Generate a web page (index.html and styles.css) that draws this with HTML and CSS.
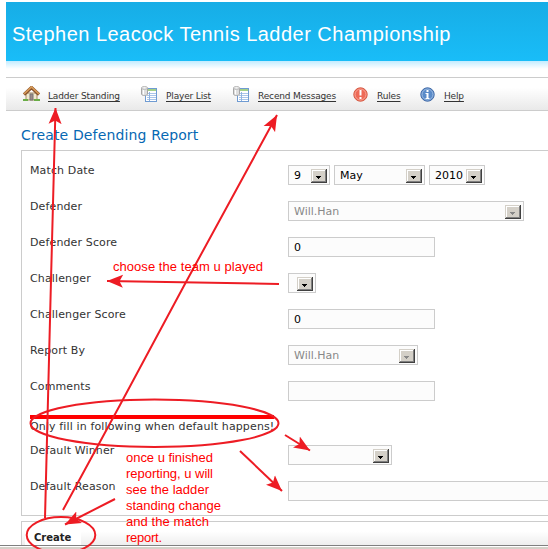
FILE: index.html
```
<!DOCTYPE html>
<html lang="en">
<head>
<meta charset="utf-8">
<title>Create Defending Report</title>
<link rel="stylesheet" href="styles.css">
</head>
<body>
<svg class="defs" width="0" height="0" aria-hidden="true">
  <symbol id="table" viewBox="0 0 17 17">
    <rect x="4.5" y="2.5" width="11" height="13" fill="#fff" stroke="#6f9bd2"/>
    <rect x="5" y="3" width="10" height="2" fill="#a3d088"/>
    <path d="M6 7.5h9M6 9.5h9M6 11.5h9M6 13.500h9" stroke="#a9c5ea"/>
    <path d="M8.500 6v9" stroke="#8fb3e0"/>
    <path d="M0.500 2v6c0 2 6 2 6 0v-6z" fill="#dedede" stroke="#a5a5a5"/>
    <ellipse cx="3.500" cy="1.900" rx="3" ry="1.400" fill="#f1f1f1" stroke="#b5b5b5"/>
    <path d="M2.500 4v4.500" stroke="#fff"/>
  </symbol>
  <symbol id="drop" viewBox="0 0 16 14">
    <path d="M0 0h16v14H0z" fill="#404040"/>
    <path d="M0 0h15v13H0z" fill="#d4d0c8"/>
    <path d="M1 1h14v12H1z" fill="#808080"/>
    <path d="M1 1h13v11H1z" fill="#fff"/>
    <path d="M2 2h12v10H2z" fill="#d4d0c8"/>
    <path d="M5 7h5v1H9v1H8v1H7V9H6V8H5z" fill="currentColor"/>
  </symbol>
</svg>
<div class="page">
  <header class="banner"><h1>Stephen Leacock Tennis Ladder Championship</h1></header>
  <div class="glow"></div>
  <nav class="menu">
    <a class="item home" href="#">
      <svg width="17" height="16" viewBox="0 0 17 16"><path d="M3 7h11v7H3z" fill="#f1e8cf" stroke="#a78b61"/><path d="M1 8.500 8.500 1.500 16 8.500" fill="none" stroke="#87512b" stroke-width="3.200"/><path d="M1 8 8.500 1 16 8" fill="none" stroke="#d79a57" stroke-width="1.700"/><path d="M7 8h3v6H7z" fill="#9c8a88" stroke="#777"/><path d="M0 13h5v2H0zM11 13h6v2h-6z" fill="#69ad47"/></svg>
      <span>Ladder Standing</span></a>
    <a class="item players" href="#"><svg width="17" height="17"><use href="#table"/></svg><span>Player List</span></a>
    <a class="item messages" href="#"><svg width="17" height="17"><use href="#table"/></svg><span>Recend Messages</span></a>
    <a class="item rules" href="#">
      <svg width="15" height="15" viewBox="0 0 15 15"><circle cx="7.500" cy="7.500" r="6.700" fill="#ee6a57" stroke="#d4563f"/><circle cx="7.500" cy="7.500" r="5.500" fill="none" stroke="#f8a597"/><path d="M6.500 3h2v5.500h-2zM6.500 10h2v2h-2z" fill="#fff"/></svg>
      <span>Rules</span></a>
    <a class="item help" href="#">
      <svg width="15" height="15" viewBox="0 0 15 15"><circle cx="7.500" cy="7.500" r="6.700" fill="#5a8bc9" stroke="#3d66a4"/><circle cx="7.500" cy="7.500" r="5.500" fill="none" stroke="#9dbce2"/><path d="M6.500 3h2v2h-2zM5.500 6h3v5h1v1h-4v-1h1V7h-1z" fill="#fff"/></svg>
      <span>Help</span></a>
  </nav>
  <h2>Create Defending Report</h2>
  <form class="panel">
    <div class="row"><label>Match Date</label>
      <div class="controls">
        <div class="field day">9<svg width="16" height="14"><use href="#drop"/></svg></div>
        <div class="field month">May<svg width="16" height="14"><use href="#drop"/></svg></div>
        <div class="field year">2010<svg width="16" height="14"><use href="#drop"/></svg></div>
      </div></div>
    <div class="row"><label>Defender</label><div class="field defender off">Will.Han<svg width="16" height="14"><use href="#drop"/></svg></div></div>
    <div class="row"><label>Defender Score</label><div class="field text">0</div></div>
    <div class="row"><label>Challenger</label><div class="field challenger"><svg width="16" height="14"><use href="#drop"/></svg></div></div>
    <div class="row"><label>Challenger Score</label><div class="field text">0</div></div>
    <div class="row"><label>Report By</label><div class="field reporter off">Will.Han<svg width="16" height="14"><use href="#drop"/></svg></div></div>
    <div class="row"><label>Comments</label><div class="field text"></div></div>
    <p class="note">Only fill in following when default happens!</p>
    <div class="row"><label>Default Winner</label><div class="field winner"><svg width="16" height="14"><use href="#drop"/></svg></div></div>
    <div class="row"><label>Default Reason</label><div class="field reason"></div></div>
  </form>
  <div class="actions"><button type="button">Create</button></div>
  <div class="frame"></div>
</div>
<svg class="marks" width="548" height="549" viewBox="0 0 548 549">
  <defs>
    <marker id="head" markerUnits="userSpaceOnUse" markerWidth="18" markerHeight="14" refX="16" refY="7" orient="auto"><path d="M16 7 0 0.500 3.500 7 0 13.500z" fill="#ed1c24"/></marker>
  </defs>
  <g fill="none" stroke="#ed1c24" stroke-width="2">
    <path d="M45 518 51 280 55.500 108" marker-end="url(#head)"/>
    <path d="M63 510 120 405 186 282 277 115" marker-end="url(#head)"/>
    <path d="M279 284 107 281" marker-end="url(#head)"/>
    <path d="M285 435 310 450.500" marker-end="url(#head)"/>
    <path d="M240 451 282 491" marker-end="url(#head)"/>
    <path d="M115 499 65 524.500" marker-end="url(#head)"/>
    <ellipse cx="154.500" cy="423.300" rx="124" ry="23.700"/>
    <ellipse cx="61" cy="535" rx="34.300" ry="18"/>
  </g>
  <g class="remark">
    <text x="113" y="271" textLength="150">choose the team u played</text>
    <text x="126" y="462" textLength="87">once u finished</text>
    <text x="126" y="478" textLength="87">reporting, u will</text>
    <text x="126" y="494" textLength="83">see the ladder</text>
    <text x="126" y="510" textLength="95">standing change</text>
    <text x="126" y="526" textLength="83">and the match</text>
    <text x="126" y="542" textLength="36">report.</text>
  </g>
</svg>
</body>
</html>
```
FILE: styles.css
```
* { box-sizing: border-box; }
body { margin: 0; background: #fff; overflow: hidden; font: 11px "DejaVu Sans", sans-serif; color: #333; }
.defs { position: absolute; }
.page { height: 549px; padding-top: 2px; overflow: hidden; display: flex; flex-direction: column; }
.banner { height: 59px; flex: none; margin-left: 6px; padding: 0 6px; display: flex; align-items: center; background: linear-gradient(#17ade6, #19bdf8); }
h1 { margin: 6px 0 0; font: 20px "Liberation Sans", sans-serif; letter-spacing: 0.48px; color: #fff; white-space: nowrap; }
.glow { height: 16px; flex: none; margin-left: 6px; background: linear-gradient(#c3ecff, #fff 8px); }
.menu { height: 34px; flex: none; margin-left: 6px; padding-left: 17px; display: flex; align-items: center; border: solid #ccc; border-width: 1px 0; background: linear-gradient(#fff 30%, #e9e9e9); }
.item { display: flex; align-items: center; height: 20px; color: #333; font: 9px "DejaVu Sans", sans-serif; letter-spacing: -0.15px; white-space: nowrap; text-decoration: underline; text-underline-offset: 2px; }
.item span { padding-top: 3px; }
.item svg { flex: none; margin-right: 8px; }
.home { width: 118px; }
.players { width: 92px; }
.messages { width: 120px; }
.rules { width: 67px; }
.rules svg, .help svg { margin-right: 9px; }
h2 { margin: 0 0 0 21px; height: 39px; flex: none; font: 14px/49px "DejaVu Sans", sans-serif; color: #0668b3; letter-spacing: 0.14px; }
.panel { margin-left: 21px; height: 366px; flex: none; border: solid #ccc; border-width: 1px 0 1px 1px; padding: 14px 0 0 8px; }
.row { display: grid; grid-template-columns: 258px 1fr; height: 36px; }
label { line-height: 12px; letter-spacing: 0.13px; }
.controls { display: flex; gap: 4px; }
.field { height: 20px; border: 1px solid #ccc; background: #fcfcfc; padding: 2px 2px 1px 5px; display: flex; align-items: center; justify-content: space-between; color: #000; line-height: 18px; }
.field svg { flex: none; margin-left: auto; }
.off { color: #888; }
.day { width: 42px; }
.month { width: 91px; }
.year { width: 56px; }
.defender { width: 236px; }
.text { width: 147px; padding-top: 3px; }
.challenger { width: 28px; }
.reporter { width: 130px; }
.winner { width: 104px; }
.reason { border-right: 0; }
.note { width: 244px; height: 30px; margin: -2px 0 0; border-top: 4px solid #f00; line-height: 15px; letter-spacing: 0.13px; white-space: nowrap; }
.actions { height: 24px; flex: none; margin: 5px 0 0 21px; border: solid #ccc; border-width: 1px 0 0 1px; background: linear-gradient(#fff 40%, #eee); display: flex; padding: 8px 0 0 3px; }
button { width: 56px; border: 0; padding: 0 0 0 9px; background: #fff; color: #222; text-align: left; font: bold 10px "DejaVu Sans", sans-serif; }
.frame { height: 4px; flex: none; border-top: 1px solid #808080; background: linear-gradient(#fff 1px, #d4d0c8 1px); }
.marks { position: absolute; left: 0; top: 0; }
.remark { font: 13px "Liberation Sans", sans-serif; fill: #f00; }
```
